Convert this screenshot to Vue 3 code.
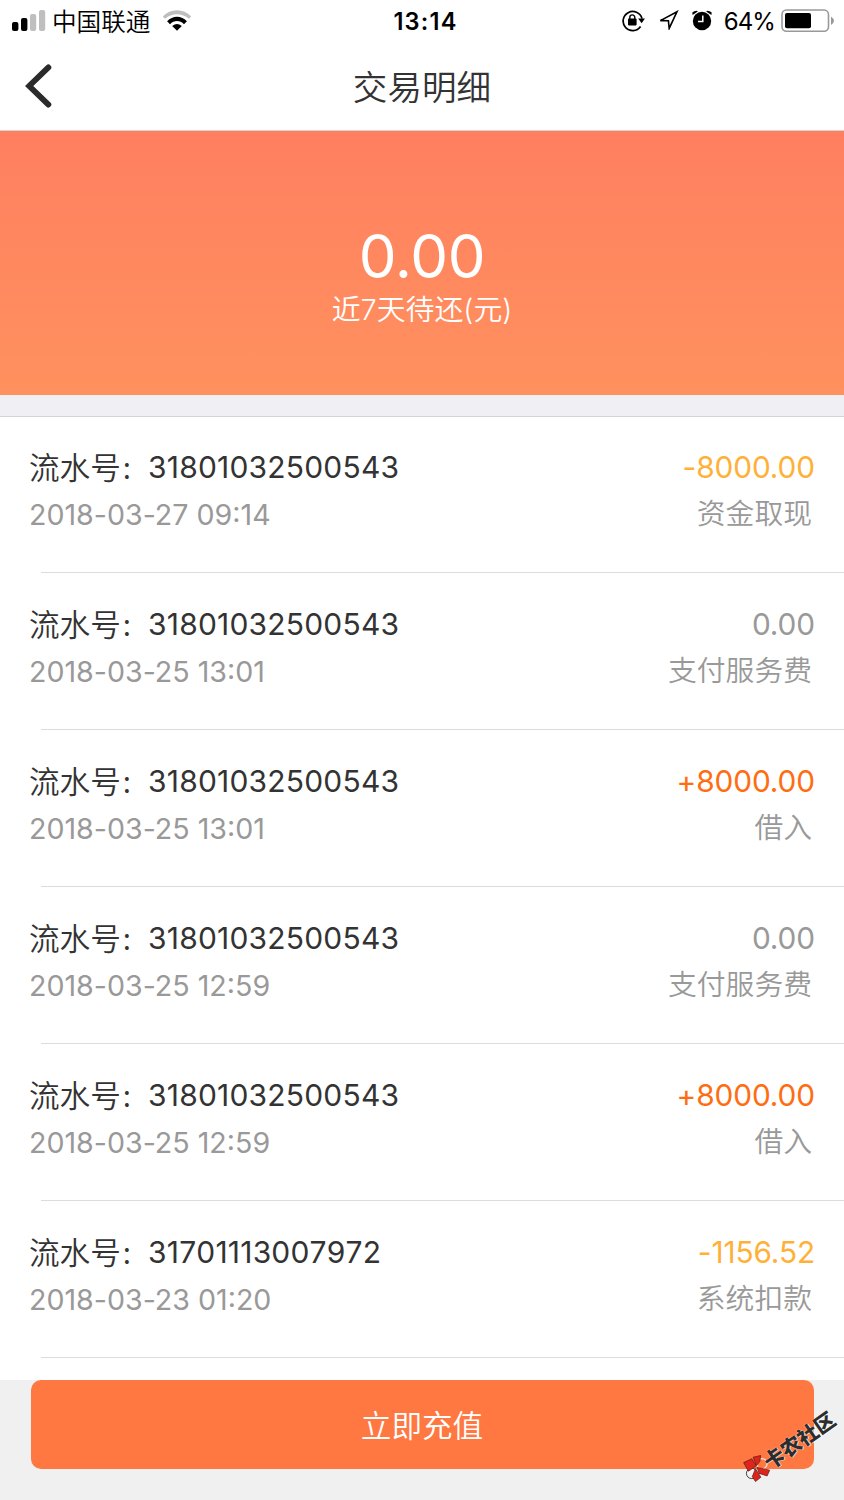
<script setup>
const rows = [
  { no: '31801032500543', date: '2018-03-27', time: '09:14', amount: '-8000.00', kind: '资金取现', tone: 'out' },
  { no: '31801032500543', date: '2018-03-25', time: '13:01', amount: '0.00', kind: '支付服务费', tone: 'zero' },
  { no: '31801032500543', date: '2018-03-25', time: '13:01', amount: '+8000.00', kind: '借入', tone: 'in' },
  { no: '31801032500543', date: '2018-03-25', time: '12:59', amount: '0.00', kind: '支付服务费', tone: 'zero' },
  { no: '31801032500543', date: '2018-03-25', time: '12:59', amount: '+8000.00', kind: '借入', tone: 'in' },
  { no: '31701113007972', date: '2018-03-23', time: '01:20', amount: '-1156.52', kind: '系统扣款', tone: 'out' },
]
</script>

<template>
  <div class="screen">
    <header class="status">
      <div class="left">
        <svg class="signal" width="34" height="22" viewBox="0 0 34 22">
          <rect x="0" y="12" width="6.4" height="9" rx="2" fill="#000" />
          <rect x="9" y="8" width="6.4" height="13" rx="2" fill="#000" />
          <rect x="18" y="4" width="6.2" height="17" rx="2" fill="#bfbfbf" />
          <rect x="27" y="0" width="6.2" height="21" rx="2" fill="#bfbfbf" />
        </svg>
        <span class="carrier">中国联通</span>
        <svg class="wifi" width="30" height="22" viewBox="0 0 30 22">
          <path d="M0.8 6.6C8.5-1.8 21.5-1.8 29.2 6.6L27 8.8C20.2 2.6 9.8 2.6 3 8.8Z" fill="#bfbfbf" />
          <path d="M5.1 11.2C10.6 5.2 19.4 5.2 24.9 11.2L22 14.2C18 10 12 10 8 14.2Z" fill="#000" />
          <path d="M10.2 16Q15 12 19.8 16L15 20.8Z" fill="#000" />
        </svg>
      </div>
      <span class="clock">13:14</span>
      <div class="right">
        <svg class="lock" width="24" height="22" viewBox="0 0 24 22">
          <path d="M18.6 16.6A9.6 9.6 0 1 1 20 8.6" fill="none" stroke="#000" stroke-width="1.7" />
          <path d="M16.2 8.6H23L19.6 13.2Z" />
          <rect x="6" y="8.6" width="8.6" height="6.8" rx="0.8" />
          <path d="M7.8 9V7.4a2.5 2.5 0 0 1 5 0V9" fill="none" stroke="#000" stroke-width="1.4" />
        </svg>
        <svg class="arrow" width="20" height="20" viewBox="0 0 20 20">
          <path d="M1.4 10.6L18 1.7L10.2 18.4L9.4 10.7Z" fill="none" stroke="#000" stroke-width="1.6" />
        </svg>
        <svg class="alarm" width="20" height="21" viewBox="0 0 20 21">
          <circle cx="10" cy="11" r="9.2" />
          <path d="M0.6 5L0.3 2.6Q2 0.8 5 0.7L5.8 1.4ZM19.4 5L19.7 2.6Q18 0.8 15 0.7L14.2 1.4Z" />
          <path d="M10.8 5.4V11.4H6" fill="none" stroke="#fff" stroke-width="1.5" />
        </svg>
        <span class="percent">64%</span>
        <svg class="battery" width="54" height="24" viewBox="0 0 54 24">
          <rect x="1" y="1" width="46.5" height="21.2" rx="4.5" fill="#fff" stroke="#999" stroke-width="1.6" />
          <rect x="4" y="4" width="26" height="15.2" rx="2" />
          <path d="M50 7.4Q53 9.6 53 11.7Q53 13.8 50 16Z" fill="#999" />
        </svg>
      </div>
    </header>

    <nav class="nav">
      <svg class="back" width="28" height="44" viewBox="0 0 28 44">
        <path d="M23.4 3.4L4.2 22L23.4 40.6" fill="none" stroke="#2b2b2b" stroke-width="5.8" stroke-linecap="round" />
      </svg>
      <h1>交易明细</h1>
    </nav>

    <section class="hero">
      <div class="sum">0.00</div>
      <div class="caption">近<span class="lat">7</span>天待还<span class="lat">(</span>元<span class="lat">)</span></div>
    </section>
    <div class="gap"></div>

    <main class="list">
      <article v-for="(r, i) in rows" :key="i" class="row">
        <div class="info">
          <div class="serial"><span class="label">流水号<i>:</i></span><span class="number">{{ r.no }}</span></div>
          <div class="date"><span class="day">{{ r.date }}</span> {{ r.time }}</div>
        </div>
        <div class="value">
          <div class="amount" :class="r.tone">{{ r.amount }}</div>
          <div class="kind">{{ r.kind }}</div>
        </div>
      </article>
    </main>

    <footer class="foot">
      <button class="pay">立即充值</button>
      <div class="mark">
        <svg width="28" height="28" viewBox="0 0 26 26">
          <circle cx="17.5" cy="9" r="4.8" fill="#ff7841" stroke="#f4e8df" stroke-width="1.2" />
          <circle cx="8" cy="18" r="4.8" fill="#f4f4f4" stroke="#222" stroke-width="0.8" />
          <path d="M0.6 8L8.2 4.4L12.4 11L5 16Z M9.4 3L16.4 1.4L15.6 7L12.6 10.6Z M13 12.4L24.8 15L22.4 20.4L15 18Z M11.6 13.6L16.6 21.6L11.6 25.6L8.6 21Z" fill="#e0241b" stroke="#4a1512" stroke-width="0.6" />
        </svg>
        <span class="brand">卡农社区</span>
      </div>
    </footer>
  </div>
</template>

<style>
body { background: #fff; }
</style>

<style scoped>
.screen {
  width: 844px;
  height: 1500px;
  overflow: hidden;
  display: flex;
  flex-direction: column;
  background: #fff;
  color: #333;
  font-family: Inter, "Noto Sans CJK SC", sans-serif;
  white-space: nowrap;
}
svg { display: block; flex: none; }
.status {
  height: 42px;
  display: grid;
  grid-template-columns: 1fr auto 1fr;
  color: #000;
  line-height: 42px;
}
.left, .right { display: flex; align-items: flex-start; }
.left { padding-left: 12px; }
.right { justify-content: flex-end; padding-right: 10px; }
.signal { margin-top: 10px; }
.carrier { margin-left: 6px; font: 350 24.6px/40px "Noto Sans CJK SC", sans-serif; }
.wifi { margin: 10px 0 0 12px; }
.clock { padding: 1px 0 0 7px; font-weight: 600; font-size: 23.6px; letter-spacing: 1.2px; }
.lock { margin-top: 10px; }
.arrow { margin: 10px 0 0 13px; }
.alarm { margin: 10px 0 0 13px; }
.percent { margin-left: 12px; padding-top: 1px; font-size: 24px; letter-spacing: -0.9px; }
.battery { margin: 9px -1px 0 6px; }
.nav {
  height: 88px;
  display: grid;
  grid-template-columns: 1fr auto 1fr;
  border-bottom: 1px solid #d9d2d2;
}
.back { margin: 22px 0 0 25px; }
.nav h1 { margin: 0; font: 350 34.6px/86px "Noto Sans CJK SC", sans-serif; }
.hero {
  height: 264px;
  box-sizing: border-box;
  padding-top: 87px;
  background: linear-gradient(#ff7f60, #ff915e);
  color: #fff;
  text-align: center;
}
.sum { height: 71px; line-height: 76px; font-size: 60px; font-weight: 400; letter-spacing: -0.3px; }
.caption { font: 350 28.9px/37px "Noto Sans CJK SC", sans-serif; }
.lat { font-family: Inter, sans-serif; }
.gap { height: 22px; box-sizing: border-box; background: #efeff4; border-bottom: 1px solid #d3d2d8; }
.list { height: 963px; }
.row {
  position: relative;
  height: 157px;
  box-sizing: border-box;
  padding: 29px 29px 0;
  display: flex;
  justify-content: space-between;
}
.row::after {
  content: "";
  position: absolute;
  left: 41px;
  right: 0;
  bottom: 1px;
  height: 1px;
  background: #dcdcdc;
}
.serial { display: flex; height: 42px; line-height: 42px; }
.label { width: 119px; font-family: "Noto Sans CJK SC", sans-serif; font-size: 30.6px; line-height: 40px; font-weight: 350; }
.label i { margin-left: 2px; font-style: normal; }
.number { font-size: 30px; letter-spacing: 0.2px; font-kerning: none; }
.date { height: 52px; line-height: 54px; font-size: 28.6px; color: #999; }
.day { font-feature-settings: "calt" 0; }
.value { text-align: right; color: #999; }
.amount { height: 42px; line-height: 42px; font-size: 29.8px; letter-spacing: -0.1px; font-feature-settings: "calt" 0; }
.out { color: #ffb137; }
.in { color: #ff6d12; }
.kind { margin-right: 3px; font: 350 28.8px/48px "Noto Sans CJK SC", sans-serif; }
.foot {
  position: relative;
  flex: 1;
  padding: 0 30.5px;
  background: #f0f0f0;
}
.pay {
  display: block;
  width: 100%;
  height: 89px;
  padding: 0;
  border: 0;
  border-radius: 10px;
  background: #ff7741;
  color: #fff;
  font: 350 30.6px/87px "Noto Sans CJK SC", sans-serif;
}
.mark { position: absolute; left: 743px; top: 74px; }
.brand {
  position: absolute;
  left: 22px;
  top: -3px;
  font: 900 20.5px/24px "Noto Sans CJK SC", sans-serif;
  color: #2d2d2d;
  transform: rotate(-35deg);
  transform-origin: 0 50%;
  text-shadow: 0 0 1px #fff, 1px 1px 0 rgba(255, 255, 255, 0.6);
}
</style>
